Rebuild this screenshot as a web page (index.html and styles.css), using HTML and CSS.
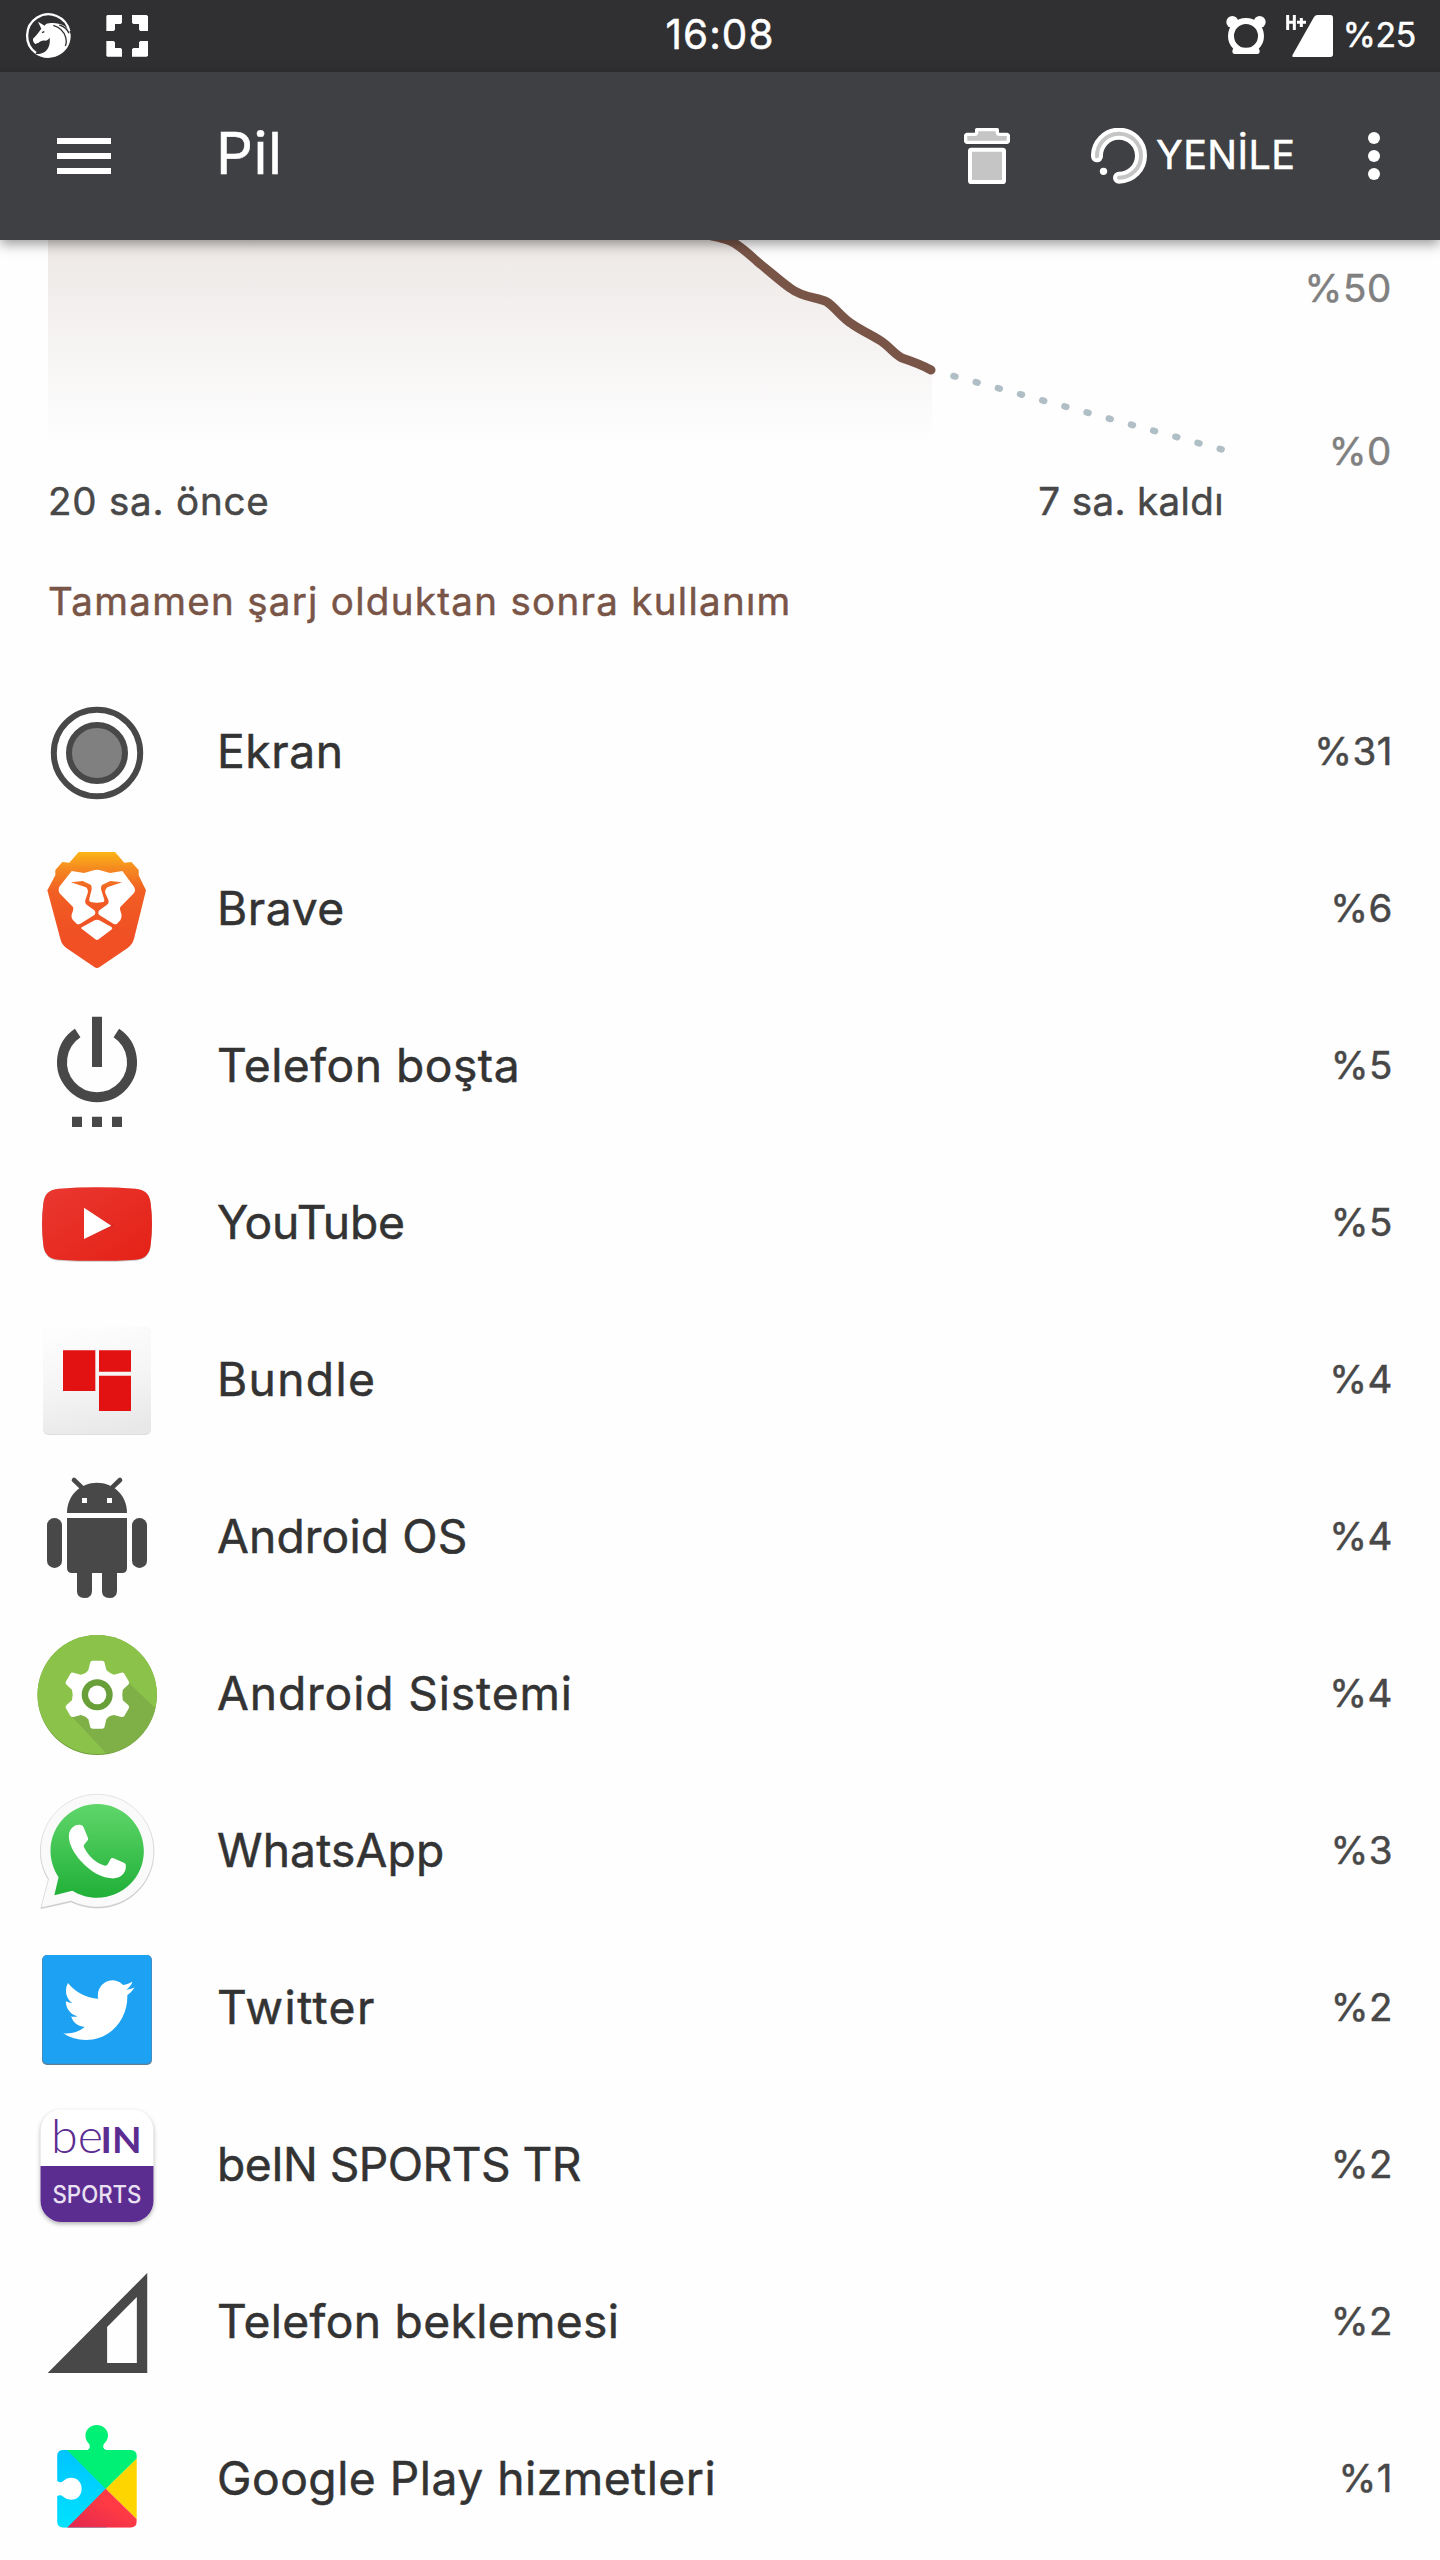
FILE: index.html
```
<!DOCTYPE html>
<html lang="tr">
<head>
    <meta charset="UTF-8">
    <meta name="viewport" content="width=device-width, initial-scale=1.0">
    <title>Pil</title>
    <link rel="stylesheet" href="styles.css">
</head>
<body>
    <!-- Status bar -->
    <div class="status-bar">
        <div class="status-left">
            <svg width="160" height="72" viewBox="0 0 480 216">
                <path d="M108 159A64 64 0 1 1 208 94" fill="none" stroke="#fff" stroke-width="7"/>
                <path d="M106 162C124 176 160 180 186 160C204 146 213 126 212 104C210 88 194 74 176 71C162 68 148 69 138 72L134 77L114 65L124 86C117 96 108 107 99 116C98 122 101 129 106 132C110 131 111 128 115 129C120 123 128 120 137 122C143 120 147 116 149 113C151 130 147 146 135 155C126 161 116 163 106 162Z" fill="#fff"/>
                <path d="M160 76C180 82 192 94 197 112C200 124 199 132 196 138M178 75C194 80 203 90 207 100" fill="none" stroke="#303032" stroke-width="4"/>
                <path d="M126 98L133 95" stroke="#303032" stroke-width="4"/>
                <path d="M322 45H366V68L362 72H345V89L341 93H319V48ZM396 45H440L444 49V93H421L417 89V72H400L396 68ZM319 123H341L345 127V144H362L366 148V170H322L319 167ZM421 123H444V167L440 170H396V148L400 144H417V127Z" fill="#fff"/>
            </svg>
        </div>
        <div class="clock">16:08</div>
        <div class="status-right">
            <svg width="123" height="72" viewBox="840 0 369 216">
                <circle cx="918" cy="108" r="45" fill="none" stroke="#fff" stroke-width="18"/>
                <circle cx="877" cy="66" r="18" fill="#fff"/>
                <circle cx="959" cy="66" r="18" fill="#fff"/>
                <path d="M884 143H952Q959 146 959 153Q959 162 952 162H884Q877 162 877 153Q877 146 884 143Z" fill="#fff"/>
                <path d="M1043 45V90M1063 45V90M1043 67H1063" stroke="#fff" stroke-width="9" fill="none"/>
                <path d="M1071 67H1098M1084 54V81" stroke="#fff" stroke-width="9"/>
                <path d="M1132 45H1171Q1179 45 1179 53V163Q1179 171 1171 171H1061Q1055 171 1058 164L1122 51Q1126 45 1132 45Z" fill="#fff"/>
            </svg>
            <span class="battery">%25</span>
        </div>
    </div>

    <!-- Toolbar -->
    <header class="toolbar">
        <svg class="menu" width="54" height="36" viewBox="0 0 54 36">
            <path d="M0 0H54V6H0ZM0 15H54V21H0ZM0 30H54V36H0Z" fill="#fff"/>
        </svg>
        <h1>Pil</h1>
        <svg class="trash" width="46" height="56" viewBox="72 384 138 168">
            <path d="M80 403H104Q110 403 110 397V389H172V397Q172 403 178 403H202L205 406V424L202 427H80L77 424V406Z" fill="#c5c5c5" stroke="#fff" stroke-width="10" stroke-linejoin="round"/>
            <rect x="90" y="449" width="102" height="97" rx="4" fill="#c5c5c5" stroke="#fff" stroke-width="12"/>
        </svg>
        <div class="refresh">
            <svg width="56" height="56" viewBox="453 384 168 168">
                <path d="M471 469A66 66 0 1 1 537 533" fill="none" stroke="#fff" stroke-width="36" stroke-linecap="round"/>
                <path d="M471 469A66 66 0 1 1 537 533" fill="none" stroke="#c5c5c5" stroke-width="12" stroke-linecap="round"/>
                <circle cx="490.500" cy="514" r="11" fill="#fff"/>
            </svg>
            <span>YENİLE</span>
        </div>
        <svg class="more" width="12" height="48" viewBox="0 0 12 48">
            <circle cx="6" cy="6" r="6" fill="#fff"/>
            <circle cx="6" cy="24" r="6" fill="#fff"/>
            <circle cx="6" cy="42" r="6" fill="#fff"/>
        </svg>
    </header>

    <!-- Battery chart -->
    <div class="chart">
        <svg width="1232" height="231" viewBox="0 240 1232 231">
            <defs>
                <linearGradient id="fill" x1="0" y1="240" x2="0" y2="442" gradientUnits="userSpaceOnUse">
                    <stop offset="0" stop-color="#795548" stop-opacity=".13"/>
                    <stop offset="1" stop-color="#795548" stop-opacity="0"/>
                </linearGradient>
            </defs>
            <path d="M48 240H732C742 245 750 254 760 263C770 271 782 282 791 289C804 298 818 298 827 302C836 308 841 317 852 324C862 331 870 334 881 341C890 347 894 354 902 358C914 362 922 365 932 370V442H48Z" fill="url(#fill)"/>
            <path d="M712 236C728 239 734 242 740 247C747 252 752 257 759 263C768 270 780 281 790 288C803 298 817 297 827 302C836 308 841 317 852 324C862 331 870 334 881 341C890 347 894 354 902 358C914 362 922 365 931 370" fill="none" stroke="#795548" stroke-width="9" stroke-linecap="round"/>
            <path d="M953.500 376L1222 449.500" fill="none" stroke="#b0bec5" stroke-width="6.500" stroke-linecap="round" stroke-dasharray="2 21"/>
        </svg>
        <div class="scale">
            <span>%50</span>
            <span>%0</span>
        </div>
    </div>
    <div class="chart-time">
        <span class="since">20 sa. önce</span>
        <span class="left">7 sa. kaldı</span>
    </div>

    <h2>Tamamen şarj olduktan sonra kullanım</h2>

    <!-- Usage list -->
    <ul class="usage">
        <li class="ekran">
            <svg class="icon" viewBox="0 0 120 120">
                <circle cx="60" cy="60" r="43.200" fill="none" stroke="#484848" stroke-width="6"/>
                <circle cx="60" cy="60" r="28" fill="#808080" stroke="#484848" stroke-width="6"/>
            </svg>
            <span class="name">Ekran</span>
            <span class="percent">%31</span>
        </li>
        <li class="brave">
            <svg class="icon" viewBox="111 510 360 360">
                <defs>
                    <linearGradient id="lion" x1="0" y1="0" x2="0" y2="1">
                        <stop offset="0" stop-color="#fbb616"/>
                        <stop offset=".14" stop-color="#f58a20"/>
                        <stop offset=".34" stop-color="#f15f23"/>
                        <stop offset=".7" stop-color="#f05024"/>
                        <stop offset="1" stop-color="#f05024"/>
                    </linearGradient>
                </defs>
                <path d="M236 516H345L373 548L394 546L416 570V586L438 631L402 776Q397 794 382 805L299 861Q291 867 283 861L200 805Q185 794 181 776L142 631L166 586V570L187 546L208 548Z" fill="url(#lion)"/>
                <path d="M215 573L252 579L284 570Q291 568 298 570L330 579L367 573L402 620Q408 630 402 639L361 681Q358 686 362 695Q368 708 361 721L351 731Q347 734 340 731L298 705Q292 699 298 691L320 675Q328 670 325 660L316 640Q313 630 322 622L366 607L331 603L307 614Q302 618 303 628L312 656Q315 664 309 666Q291 671 272 666Q266 664 268 656L275 628Q276 618 272 614L248 603L213 607L258 622Q266 628 263 640L256 660Q254 670 261 675L283 691Q289 699 283 705L241 731Q234 734 230 731L218 719Q211 708 218 695Q222 688 219 681L180 641Q173 632 178 620Z" fill="#fff"/>
                <path d="M284 721Q291 717 298 721L333 740Q340 744 334 749L296 778Q291 782 286 778L247 748Q240 743 248 740Z" fill="#fff"/>
            </svg>
            <span class="name">Brave</span>
            <span class="percent">%6</span>
        </li>
        <li class="bosta">
            <svg class="icon" viewBox="111 21 360 360">
                <path d="M276 50H306V201H276ZM216 350H246V381H216ZM276 350H306V381H276ZM336 350H366V381H336Z" fill="#484848"/>
                <path d="M233 99A105 105 0 1 0 349 99" fill="none" stroke="#484848" stroke-width="30"/>
            </svg>
            <span class="name">Telefon boşta</span>
            <span class="percent">%5</span>
        </li>
        <li class="youtube">
            <svg class="icon" viewBox="111 492 360 360">
                <defs>
                    <linearGradient id="tube" x1="0" y1="0" x2="1" y2="1">
                        <stop offset="0" stop-color="#e93830"/>
                        <stop offset="1" stop-color="#e52117"/>
                    </linearGradient>
                </defs>
                <path class="shadow" d="M176 566Q291 558 406 566Q448 568 452 610Q460 672 452 734Q448 776 406 779Q291 786 176 779Q134 776 130 734Q122 672 130 610Q134 568 176 566Z" fill="url(#tube)"/>
                <path d="M252 624L333 676L343 670L336 680L252 716Z" fill="#b5221c" opacity=".5"/>
                <path d="M252 623L334 677L252 717Z" fill="#fff"/>
            </svg>
            <span class="name">YouTube</span>
            <span class="percent">%5</span>
        </li>
        <li class="bundle">
            <svg class="icon" viewBox="111 63 360 360">
                <defs>
                    <linearGradient id="paper" x1=".4" y1="0" x2=".6" y2="1">
                        <stop offset="0" stop-color="#fdfdfd"/>
                        <stop offset=".5" stop-color="#f5f5f5"/>
                        <stop offset="1" stop-color="#e8e8e8"/>
                    </linearGradient>
                </defs>
                <rect x="129" y="82" width="324" height="323" rx="18" fill="#dadada"/>
                <rect x="129" y="81" width="324" height="322" rx="18" fill="url(#paper)"/>
                <path d="M189 151H286V273H189ZM297 151H393V215H297ZM297 227H393V333H297Z" fill="#e31212"/>
            </svg>
            <span class="name">Bundle</span>
            <span class="percent">%4</span>
        </li>
        <li class="android">
            <svg class="icon" viewBox="111 534 360 360">
                <path d="M222 540L249 566M360 540L333 566" stroke="#484848" stroke-width="14" stroke-linecap="round"/>
                <path d="M201 639C201 585 242 548 291 548S381 585 381 639Z" fill="#484848"/>
                <path d="M246 594H261V609H246ZM321 594H336V609H321Z" fill="#fff"/>
                <path d="M201 654H381V804Q381 819 366 819H351V872Q351 894 328 894T306 872V819H276V872Q276 894 253 894T231 872V819H216Q201 819 201 804Z" fill="#484848"/>
                <rect x="141" y="654" width="45" height="150" rx="22" fill="#484848"/>
                <rect x="396" y="654" width="45" height="150" rx="22" fill="#484848"/>
            </svg>
            <span class="name">Android OS</span>
            <span class="percent">%4</span>
        </li>
        <li class="sistem">
            <svg class="icon" viewBox="96.700 45 313.600 360" preserveAspectRatio="none">
                <defs>
                    <clipPath id="disc"><ellipse cx="254" cy="224" rx="156" ry="179"/></clipPath>
                </defs>
                <ellipse cx="254" cy="225" rx="156" ry="180" fill="#6f9c3b"/>
                <ellipse cx="254" cy="223.500" rx="156" ry="178.500" fill="#8bc34a"/>
                <path d="M188 290L284 408L420 380V280L338 190L254 224Z" fill="#7fb048" clip-path="url(#disc)"/>
                <path d="M236 127Q237 122 242 122H267Q272 122 273 127L278 150Q286 160 298 164L317 158Q322 156 325 161L337 185Q339 190 335 194L321 209Q318 224 321 241L335 255Q339 259 337 264L325 288Q322 292 317 291L298 285Q285 286 278 298L273 322Q272 326 267 326H242Q237 326 236 322L231 298Q224 288 211 285L192 291Q187 292 184 288L172 264Q170 259 174 255L188 241Q192 224 188 209L174 194Q170 190 172 185L184 161Q187 156 192 158L211 164Q224 162 231 150Z" fill="#fff"/>
                <ellipse cx="254" cy="224" rx="40.500" ry="46.500" fill="#689f38"/>
                <ellipse cx="254" cy="224.500" rx="24" ry="28" fill="#fff"/>
            </svg>
            <span class="name">Android Sistemi</span>
            <span class="percent">%4</span>
        </li>
        <li class="whatsapp">
            <svg class="icon" viewBox="96.700 516 313.600 360" preserveAspectRatio="none">
                <defs>
                    <linearGradient id="bubble" x1="0" y1="0" x2="0" y2="1">
                        <stop offset="0" stop-color="#60d66a"/>
                        <stop offset="1" stop-color="#20b038"/>
                    </linearGradient>
                </defs>
                <path class="shadow" d="M107 863L127 777C112 750 106 722 106 693C106 598 173 523 254 523S402 598 402 693S336 861 254 861C228 861 206 854 186 843Z" fill="#fafafa" stroke="#d8d8d8" stroke-width="1.500"/>
                <path d="M142 826L153 772C140 748 132 722 132 693C132 615 187 552 254 552S376 615 376 693S322 833 254 833C230 833 208 825 189 812Z" fill="url(#bubble)"/>
                <path d="M180 650C180 627 194 612 211 615Q217 616 219 623L230 654Q232 660 227 664L219 676Q218 681 222 687C234 711 252 730 274 737Q279 738 282 732L289 717Q292 712 297 715L325 729Q330 732 329 739C329 763 312 777 291 775C268 774 236 756 212 724C194 701 180 672 180 650Z" fill="#fff"/>
            </svg>
            <span class="name">WhatsApp</span>
            <span class="percent">%3</span>
        </li>
        <li class="twitter">
            <svg class="icon" viewBox="0 0 120 120">
                <rect x="5" y="6" width="110" height="110" rx="5" fill="#5d7f95"/>
                <rect x="5.500" y="6" width="109" height="108.700" rx="5" fill="#1da1f2"/>
                <path transform="translate(26.100 24.400) scale(2.980 3.060)" d="M23.953 4.570a10 10 0 01-2.825.775 4.958 4.958 0 002.163-2.723c-.951.555-2.005.959-3.127 1.184a4.920 4.920 0 00-8.384 4.482C7.690 8.095 4.067 6.130 1.640 3.162a4.822 4.822 0 00-.666 2.475c0 1.710.870 3.213 2.188 4.096a4.904 4.904 0 01-2.228-.616v.060a4.923 4.923 0 003.946 4.827 4.996 4.996 0 01-2.212.085 4.936 4.936 0 004.604 3.417 9.867 9.867 0 01-6.102 2.105c-.390 0-.779-.023-1.170-.067a13.995 13.995 0 007.557 2.209c9.053 0 13.998-7.496 13.998-13.985 0-.210 0-.420-.015-.630A9.935 9.935 0 0024 4.590z" fill="#fff"/>
            </svg>
            <span class="name">Twitter</span>
            <span class="percent">%2</span>
        </li>
        <li class="bein">
            <svg class="icon" viewBox="0 0 120 120">
                <rect class="shadow" x="3.500" y="3.500" width="113" height="112.500" rx="21" fill="#fff"/>
                <path d="M3.500 60H116.500V95A21 21 0 0 1 95.500 116H24.500A21 21 0 0 1 3.500 95Z" fill="#5c2d91"/>
                <text class="bein-top" x="14" y="47" textLength="52" lengthAdjust="spacingAndGlyphs">be</text>
                <text class="bein-in" x="63.500" y="47" textLength="41" lengthAdjust="spacingAndGlyphs">IN</text>
                <text class="bein-sports" x="15.500" y="96.500" textLength="89" lengthAdjust="spacingAndGlyphs">SPORTS</text>
            </svg>
            <span class="name">beIN SPORTS TR</span>
            <span class="percent">%2</span>
        </li>
        <li class="bekleme">
            <svg class="icon" viewBox="78.400 69 254.300 360" preserveAspectRatio="none">
                <path d="M101 399L312 99V399ZM227 261V369H290V171Z" fill="#484848" fill-rule="evenodd"/>
            </svg>
            <span class="name">Telefon beklemesi</span>
            <span class="percent">%2</span>
        </li>
        <li class="play">
            <svg class="icon" viewBox="78.400 540 254.300 360" preserveAspectRatio="none">
                <defs>
                    <clipPath id="puzzle">
                        <path d="M133 630H186Q193 624 189 612C184 606 181 597 181 586C181 569 192 555 205 555S229 569 229 586C229 597 225 606 220 612Q216 624 224 630H277Q290 632 290 648V844Q290 861 277 863H133Q121 861 121 844V769Q128 762 134 770Q141 779 151 779C164 779 173 765 173 746S164 713 151 713Q141 713 134 723Q128 731 121 722V648Q121 632 133 630Z"/>
                    </clipPath>
                    <linearGradient id="blue" x1="0" y1="0" x2="0" y2="1">
                        <stop offset="0" stop-color="#00c3ff"/>
                        <stop offset="1" stop-color="#00e2ff"/>
                    </linearGradient>
                    <linearGradient id="red" x1="1" y1="0" x2="0" y2="1">
                        <stop offset=".4" stop-color="#ff3a44"/>
                        <stop offset="1" stop-color="#e0264f"/>
                    </linearGradient>
                </defs>
                <g clip-path="url(#puzzle)">
                    <rect x="120" y="625" width="106" height="240" fill="url(#blue)"/>
                    <path d="M224 746L290 655L300 640V860L290 838Z" fill="#ffd500"/>
                    <path d="M224 746L142 630V550H295V648Z" fill="#00f076"/>
                    <path d="M224 746L290 838V865H141Z" fill="url(#red)"/>
                </g>
            </svg>
            <span class="name">Google Play hizmetleri</span>
            <span class="percent">%1</span>
        </li>
    </ul>
</body>
</html>
```
FILE: styles.css
```
body {
    font-family: Inter, "Noto Sans", sans-serif;
    margin: 0;
    padding: 0;
    height: 2560px;
    overflow: hidden;
    background-color: #fefefe;
    color: #333;
    -webkit-text-stroke: 0.5px;
}
svg {
    display: block;
    flex: none;
    -webkit-text-stroke: 0;
}
/* Status bar */
.status-bar {
    display: grid;
    grid-template-columns: 1fr auto 1fr;
    height: 72px;
    background-color: #303032;
    color: #fff;
    line-height: 69px;
}
.clock {
    font-size: 40.4px;
    letter-spacing: 1.08px;
}
.status-right {
    display: flex;
    justify-content: flex-end;
    padding-right: 24px;
}
.battery {
    font-size: 33.7px;
    letter-spacing: -0.3px;
}
/* Toolbar */
.toolbar {
    position: relative;
    display: flex;
    align-items: center;
    height: 168px;
    box-sizing: border-box;
    padding: 0 60px 0 57px;
    background-color: #3f4044;
    color: #fff;
    box-shadow: 0 4px 12px rgba(0, 0, 0, 0.4);
}
.toolbar h1 {
    flex: 1;
    margin: 0 0 6px 105px;
    font-size: 57.8px;
    font-weight: normal;
    letter-spacing: 0.5px;
}
.trash {
    margin-right: 81px;
}
.refresh {
    display: flex;
    align-items: center;
    margin-right: 72px;
}
.refresh span {
    width: 140px;
    margin: 0 0 3px 9px;
    font-size: 39.5px;
    letter-spacing: 0.4px;
}
/* Battery chart */
.chart {
    display: flex;
    justify-content: space-between;
    height: 231px;
    padding-right: 48px;
}
.scale {
    display: flex;
    flex-direction: column;
    justify-content: space-between;
    margin-top: 28px;
    font-size: 38.5px;
    line-height: 40px;
    letter-spacing: 0.63px;
    text-align: right;
    color: #808080;
}
.chart-time {
    display: flex;
    justify-content: space-between;
    padding: 0 216px 0 48px;
    font-size: 38.5px;
    line-height: 60px;
    color: #484848;
}
.since {
    letter-spacing: 0.8px;
}
.left {
    letter-spacing: 0.38px;
}
h2 {
    margin: 40px 0 42px 48px;
    font-size: 38.5px;
    line-height: 60px;
    font-weight: normal;
    letter-spacing: 1.3px;
    color: #795548;
}
/* Usage list */
.usage {
    margin: 0;
    padding: 0;
    list-style: none;
}
.usage li {
    display: flex;
    height: 157px;
    padding: 0 47px 0 37px;
    line-height: 157px;
}
.icon {
    width: 120px;
    height: 120px;
    margin-top: 20px;
    overflow: visible;
}
.name {
    flex: 1;
    margin-left: 60px;
    font-size: 46.2px;
    letter-spacing: 0.6px;
}
.percent {
    font-size: 38.5px;
    letter-spacing: 0.5px;
    color: #484848;
}
.shadow {
    filter: drop-shadow(0 2px 2px rgba(0, 0, 0, 0.3));
}
/* Letter spacing of single names */
.bosta .name {
    letter-spacing: 0.5px;
}
.youtube .name {
    letter-spacing: -0.26px;
}
.bundle .name {
    letter-spacing: 1.33px;
}
.android .name,
.whatsapp .name {
    letter-spacing: 0.14px;
}
.sistem .name {
    letter-spacing: 0.88px;
}
.twitter .name {
    letter-spacing: 1.41px;
}
.bein .name {
    letter-spacing: -0.54px;
}
.bekleme .name {
    letter-spacing: 0.33px;
}
.play .name {
    letter-spacing: 0.5px;
}
/* beIN logo */
.bein-top {
    font: 300 47px Lato, sans-serif;
    fill: #5c2d91;
}
.bein-in {
    font: 700 36px Lato, sans-serif;
    fill: #5c2d91;
}
.bein-sports {
    font: 500 24px Inter, sans-serif;
    fill: #e9e0f2;
}
```
